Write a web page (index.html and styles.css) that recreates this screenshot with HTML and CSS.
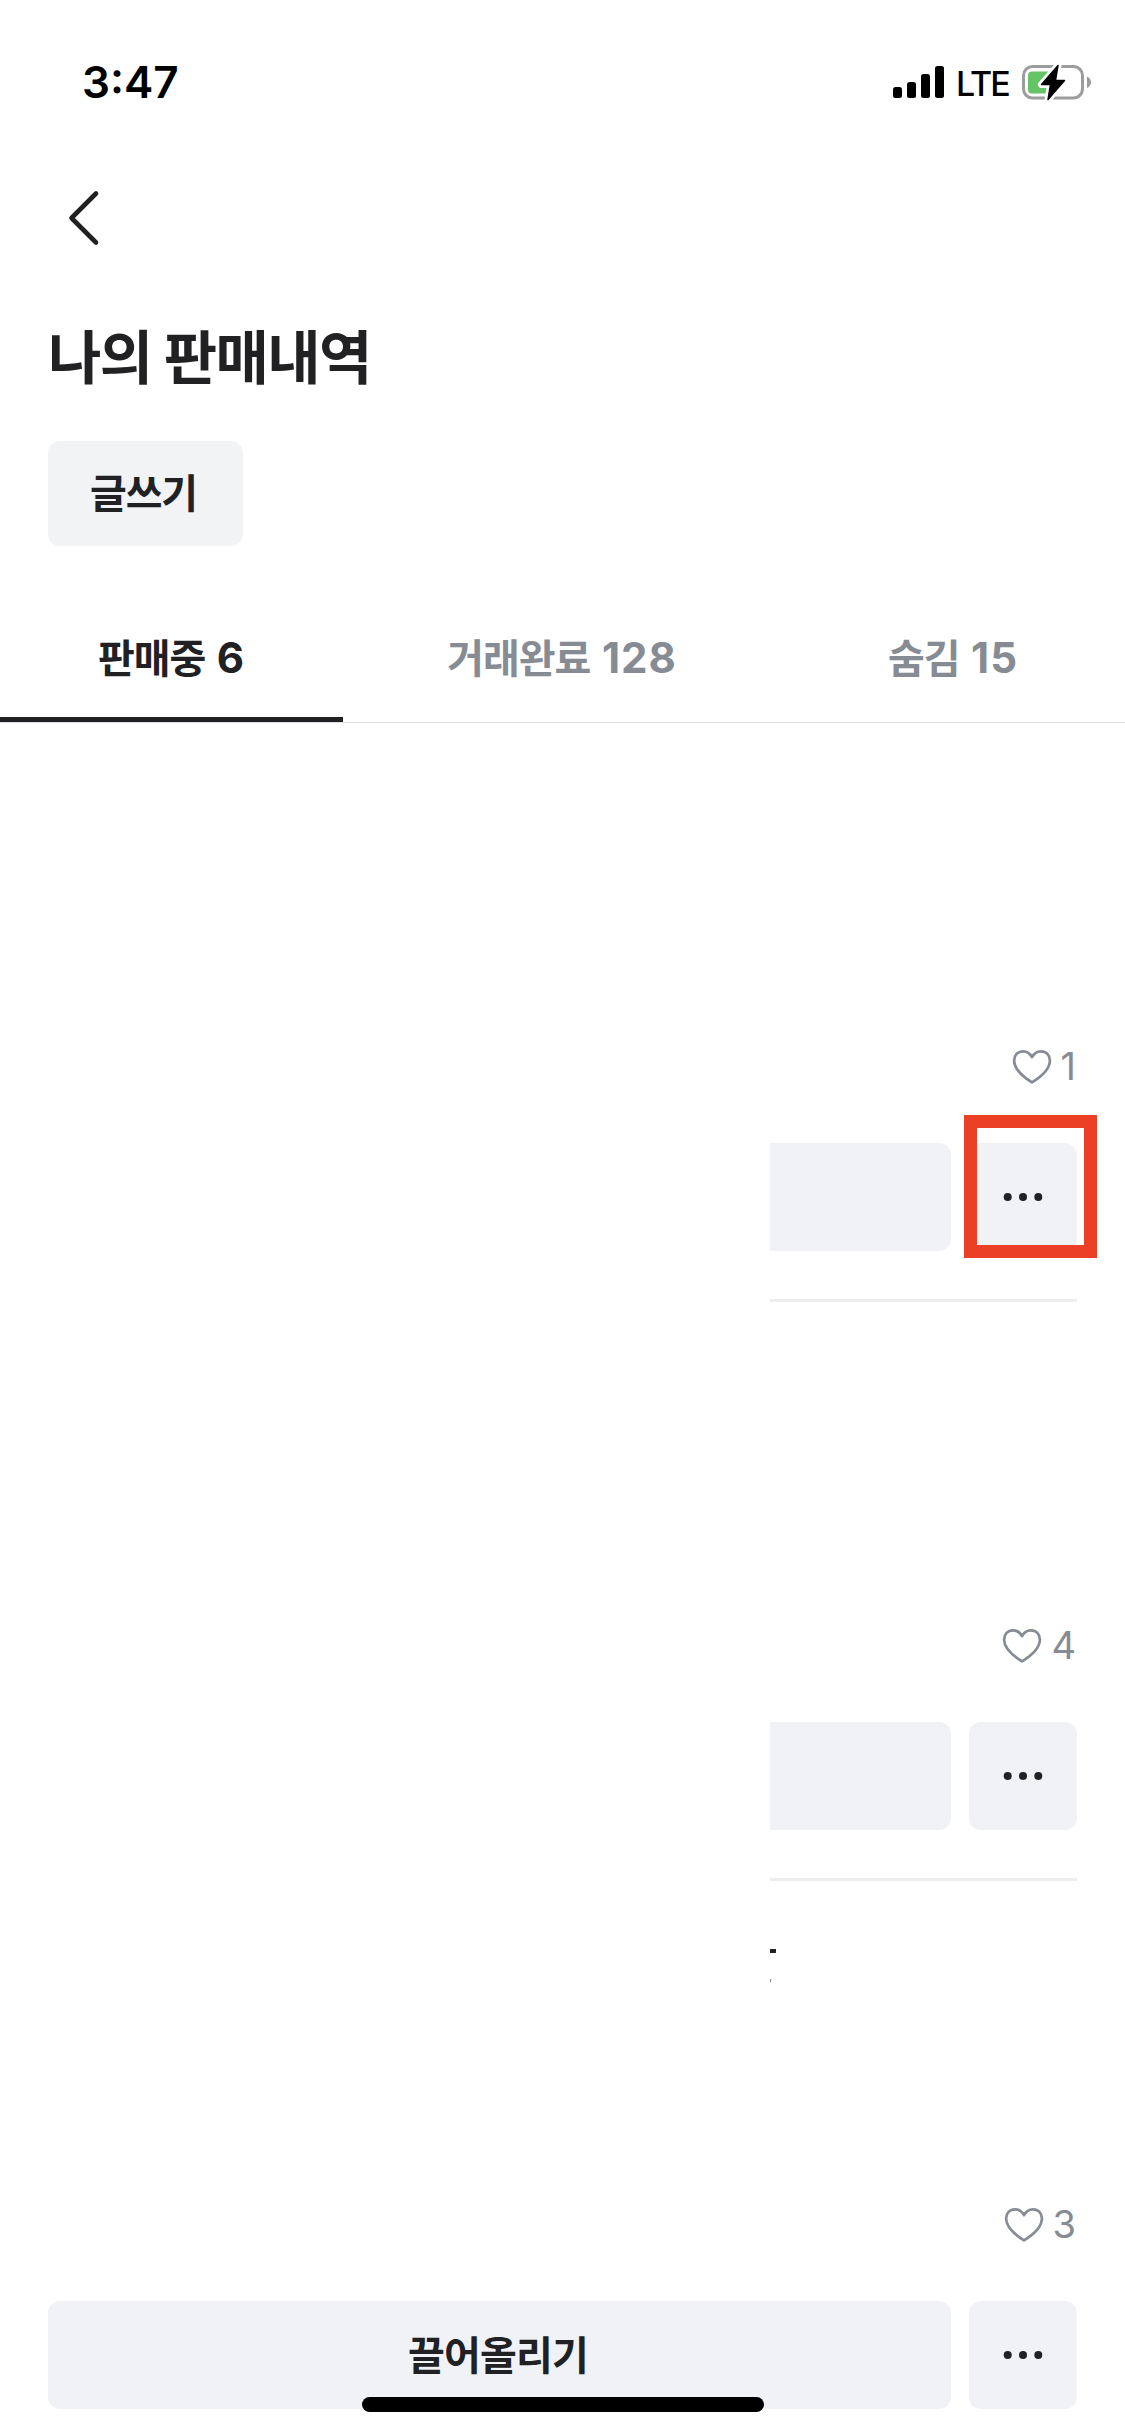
FILE: index.html
```
<!DOCTYPE html>
<html lang="ko">
<head>
    <meta charset="UTF-8">
    <meta name="viewport" content="width=device-width, initial-scale=1.0">
    <title>나의 판매내역</title>
    <link rel="stylesheet" href="styles.css">
</head>
<body>
    <svg class="symbols" width="0" height="0">
        <symbol id="heart" viewBox="0 0 40 36">
            <path d="M20 8.2C18.2 4.6 14.8 2.3 11 2.3C5.7 2.3 2.1 6.2 2.1 11.5C2.1 20.5 10.5 27.5 20 33.4C29.5 27.5 37.9 20.5 37.9 11.5C37.9 6.2 34.3 2.3 29 2.3C25.2 2.3 21.8 4.6 20 8.2Z" fill="none" stroke="#868b94" stroke-width="2.7" stroke-linejoin="round"/>
        </symbol>
        <symbol id="dots" viewBox="0 0 40 10">
            <circle cx="4.7" cy="5" r="4"/>
            <circle cx="20" cy="5" r="4"/>
            <circle cx="35.3" cy="5" r="4"/>
        </symbol>
    </svg>

    <div class="screen">
        <div class="status-bar">
            <span class="time">3:47</span>
            <div class="status-icons">
                <svg class="signal" width="51" height="32" viewBox="0 0 51 32">
                    <rect x="0" y="21" width="9" height="11" rx="2.5"/>
                    <rect x="14" y="16" width="9" height="16" rx="2.5"/>
                    <rect x="28" y="8" width="9" height="24" rx="2.5"/>
                    <rect x="42" y="0" width="9" height="32" rx="2.5"/>
                </svg>
                <span class="network">LTE</span>
                <svg class="battery" width="70" height="38" viewBox="0 0 70 38">
                    <rect x="1.5" y="3.5" width="59" height="31.5" rx="9" fill="none" stroke="#9c9c9c" stroke-width="3"/>
                    <path d="M65 13.5C67.5 14.5 69 16.7 69 19.2C69 21.7 67.5 24 65 25Z" fill="#9c9c9c"/>
                    <rect x="6" y="8.5" width="27" height="22" rx="4" fill="#65c466"/>
                    <path d="M36 2.5L19.5 21.5H28.5L26 36.5L42.5 17.5H33.5Z" fill="#000" stroke="#fff" stroke-width="7" stroke-linejoin="round"/>
                    <path d="M36 2.5L19.5 21.5H28.5L26 36.5L42.5 17.5H33.5Z" fill="#000" stroke="#000" stroke-width="1.5" stroke-linejoin="round"/>
                </svg>
            </div>
        </div>

        <div class="nav">
            <svg width="32" height="56" viewBox="0 0 32 56">
                <path d="M28 3.5L3.5 28L28 52.5" fill="none" stroke="#212124" stroke-width="4.6" stroke-linecap="round" stroke-linejoin="round"/>
            </svg>
        </div>

        <div class="header">
            <h1>나의 판매내역</h1>
            <button class="write-btn">글쓰기</button>
        </div>

        <div class="tabs">
            <div class="tab active">판매중 <span class="count">6</span></div>
            <div class="tab">거래완료 <span class="count">128</span></div>
            <div class="tab">숨김 <span class="count">15</span></div>
        </div>

        <div class="list">
            <div class="item">
                <div class="likes"><svg class="heart"><use href="#heart"/></svg><span>1</span></div>
                <div class="actions">
                    <div class="btn cut"></div>
                    <div class="btn more marked"><svg class="dots"><use href="#dots"/></svg></div>
                </div>
                <div class="divider"></div>
            </div>
            <div class="item">
                <div class="likes"><svg class="heart"><use href="#heart"/></svg><span>4</span></div>
                <div class="actions">
                    <div class="btn cut"></div>
                    <div class="btn more"><svg class="dots"><use href="#dots"/></svg></div>
                </div>
                <div class="divider"></div>
            </div>
            <div class="item">
                <div class="remains">
                    <div class="stroke"></div>
                    <div class="speck"></div>
                </div>
                <div class="likes"><svg class="heart"><use href="#heart"/></svg><span>3</span></div>
                <div class="actions">
                    <div class="btn full">끌어올리기</div>
                    <div class="btn more"><svg class="dots"><use href="#dots"/></svg></div>
                </div>
            </div>
        </div>

        <div class="home-indicator"></div>
    </div>
</body>
</html>
```
FILE: styles.css
```
* {
    margin: 0;
    padding: 0;
    box-sizing: border-box;
}

body {
    font-family: Inter, 'Noto Sans CJK KR', sans-serif;
    color: #212124;
    background: #fff;
}

.symbols {
    position: absolute;
}

.screen {
    position: relative;
    width: 1125px;
    height: 2436px;
    overflow: hidden;
}

/* status bar */
.status-bar {
    height: 132px;
    padding: 32px 33px 0 82px;
    display: flex;
    justify-content: space-between;
    align-items: center;
    color: #000;
}

.time {
    font-size: 44px;
    font-weight: 600;
    line-height: 1;
}

.status-icons {
    display: flex;
    align-items: center;
}

.network {
    width: 52px;
    margin: 3px 14px 0 12px;
    font-size: 34px;
    font-weight: 500;
    line-height: 1;
    letter-spacing: -2px;
}

.nav {
    height: 172px;
    padding: 58px 0 0 68px;
}

.nav svg {
    display: block;
}

/* title */
.header {
    height: 306px;
    padding-left: 48px;
}

.header h1 {
    height: 137px;
    font-size: 58px;
    font-weight: 700;
    line-height: 109px;
    letter-spacing: -1.6px;
}

.write-btn {
    display: block;
    width: 195px;
    height: 105px;
    padding: 0 4px 5px 0;
    border: none;
    border-radius: 12px;
    background: #f1f3f5;
    color: #212124;
    font: inherit;
    font-size: 40px;
    font-weight: 700;
    letter-spacing: -1.2px;
}

/* tabs */
.tabs {
    height: 113px;
    display: grid;
    grid-template-columns: 343px 438px 344px;
    border-bottom: 1px solid #dcdce2;
}

.tab {
    height: 112px;
    border-bottom: 5px solid transparent;
    text-align: center;
    font-size: 40px;
    font-weight: 700;
    line-height: 96px;
    letter-spacing: -1px;
    color: #868b94;
}

.count {
    margin-left: 3px;
    font-size: 42px;
    letter-spacing: 1px;
}

.tab.active {
    color: #212124;
    border-bottom-color: #212124;
}

/* items */
.item {
    position: relative;
    height: 579px;
    padding: 326px 48px 0 48px;
}

.likes {
    height: 36px;
    padding-right: 1px;
    display: flex;
    justify-content: flex-end;
    align-items: center;
    gap: 9px;
    font-size: 38px;
    line-height: 34px;
    color: #868b94;
}

.likes span {
    height: 36px;
}

.heart {
    width: 40px;
    height: 36px;
}

.actions {
    margin-top: 58px;
    display: flex;
    justify-content: flex-end;
    gap: 18px;
}

.btn {
    height: 108px;
    border-radius: 12px;
    background: #f1f2f6;
    display: flex;
    align-items: center;
    justify-content: center;
}

.btn.cut {
    width: 181px;
    border-radius: 0 12px 12px 0;
}

.btn.full {
    flex: 1;
    padding: 0 3px 4px 0;
    font-size: 40px;
    font-weight: 700;
    letter-spacing: -0.8px;
}

.btn.more {
    position: relative;
    width: 108px;
}

.dots {
    width: 40px;
    height: 10px;
    fill: #212124;
}

.marked::after {
    content: '';
    position: absolute;
    top: -28px;
    left: -5px;
    width: 133px;
    height: 143px;
    box-sizing: border-box;
    border: 13px solid #eb4026;
}

.divider {
    width: 307px;
    height: 3px;
    margin: 48px 0 0 auto;
    background: #eee;
}

.remains {
    position: absolute;
    top: 68px;
    left: 770px;
}

.stroke {
    width: 6px;
    height: 4px;
    background: #212124;
}

.speck {
    width: 1px;
    height: 3px;
    margin-top: 26px;
    background: #868b94;
}

.home-indicator {
    position: absolute;
    left: 362px;
    top: 2397px;
    width: 402px;
    height: 15px;
    border-radius: 8px;
    background: #000;
}
```
